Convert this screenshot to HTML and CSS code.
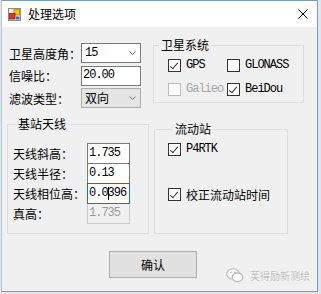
FILE: index.html
```html
<!DOCTYPE html>
<html lang="zh-CN">
<head>
    <meta charset="UTF-8">
    <meta name="viewport" content="width=device-width, initial-scale=1.0">
    <title>处理选项</title>
    <link rel="stylesheet" href="styles.css">
</head>
<body>
    <div class="window">
        <div class="titlebar">
            <svg class="app-icon" viewBox="0 0 13 13">
                <rect x="0.5" y="0.5" width="12" height="12" fill="#e8e8e8" stroke="#8a8a8a"/>
                <rect x="6" y="1.5" width="5.5" height="5.5" fill="#f5c400" stroke="#b08a00" stroke-width="0.8"/>
                <rect x="1.5" y="5.5" width="5.5" height="5.5" fill="#d83a2a" stroke="#8a1f14" stroke-width="0.8"/>
                <rect x="8" y="8.5" width="3.5" height="3" fill="#3a6fc4"/>
            </svg>
            <span class="title">处理选项</span>
            <svg class="close" viewBox="0 0 10 10">
                <path d="M0.5 0.5 L9.5 9.5 M9.5 0.5 L0.5 9.5" stroke="#000" stroke-width="1" fill="none"/>
            </svg>
        </div>

        <div class="client">
            <div class="top">
                <div class="params">
                    <div class="row">
                        <label>卫星高度角：</label>
                        <div class="combo"><span class="val">15</span>
                            <svg class="chev" viewBox="0 0 7 4"><path d="M0.5 0.5 L3.5 3.5 L6.5 0.5" stroke="#555" fill="none"/></svg>
                        </div>
                    </div>
                    <div class="row">
                        <label>信噪比：</label>
                        <div class="textbox wide"><span class="val">20.00</span></div>
                    </div>
                    <div class="row">
                        <label>滤波类型：</label>
                        <div class="combo locked"><span class="cjk-val">双向</span>
                            <svg class="chev" viewBox="0 0 7 4"><path d="M0.5 0.5 L3.5 3.5 L6.5 0.5" stroke="#777" fill="none"/></svg>
                        </div>
                    </div>
                </div>

                <fieldset class="group sat">
                    <legend>卫星系统</legend>
                    <div class="checks">
                        <div class="check"><span class="box on"></span><span class="mono">GPS</span></div>
                        <div class="check"><span class="box"></span><span class="mono">GLONASS</span></div>
                        <div class="check off"><span class="box"></span><span class="mono">Galieo</span></div>
                        <div class="check"><span class="box on"></span><span class="mono">BeiDou</span></div>
                    </div>
                </fieldset>
            </div>

            <div class="middle">
                <fieldset class="group antenna">
                    <legend>基站天线</legend>
                    <div class="arow">
                        <label>天线斜高：</label>
                        <div class="textbox"><span class="val">1.735</span></div>
                    </div>
                    <div class="arow">
                        <label>天线半径：</label>
                        <div class="textbox"><span class="val">0.13</span></div>
                    </div>
                    <div class="arow">
                        <label>天线相位高：</label>
                        <div class="textbox focus"><span class="val">0.0<i class="caret"></i>396</span></div>
                    </div>
                    <div class="arow">
                        <label>真高：</label>
                        <div class="textbox readonly"><span class="val">1.735</span></div>
                    </div>
                </fieldset>

                <fieldset class="group rover">
                    <legend>流动站</legend>
                    <div class="check"><span class="box on"></span><span class="mono">P4RTK</span></div>
                    <div class="check second"><span class="box on"></span><span>校正流动站时间</span></div>
                </fieldset>
            </div>

            <div class="actions">
                <button type="button">确认</button>
            </div>
        </div>

        <div class="watermark">
            <svg class="wechat" viewBox="0 0 18 15">
                <ellipse cx="7" cy="6" rx="6.3" ry="5.2" fill="#fff" stroke="#b5b5b5" stroke-width="1.1"/>
                <ellipse cx="11.5" cy="9.3" rx="5.4" ry="4.4" fill="#fff" stroke="#b5b5b5" stroke-width="1.1"/>
                <circle cx="4.8" cy="4.6" r="0.8" fill="#b5b5b5"/>
                <circle cx="8.6" cy="4.6" r="0.8" fill="#b5b5b5"/>
            </svg>
            <span>芙得励新测绘</span>
        </div>
    </div>
</body>
</html>
```

FILE: styles.css
```css
* { box-sizing: border-box; }
body { margin: 0; background: #dfe6ec; font-family: "Noto Sans CJK SC", sans-serif; font-size: 12px; color: #000; }

.window { position: relative; margin-left: 1px; width: 317px; height: 292px; border: 1px solid #7a9cbd; border-left-color: #b9c8d6; background: #f0f0f0; }

.titlebar { height: 26px; background: #fff; display: flex; align-items: center; padding-left: 6px; }
.app-icon { width: 13px; height: 13px; }
.title { margin-left: 7px; line-height: 14px; }
.close { margin-left: auto; margin-right: 9px; width: 10px; height: 10px; }

.client { padding-top: 11px; }

.top { display: flex; align-items: flex-start; }
.params { display: flex; flex-direction: column; gap: 2.5px; margin: 5px 0 0 7px; }
.row { display: flex; align-items: center; height: 20px; }
.row label { width: 72px; }

.combo, .textbox { display: flex; align-items: center; height: 20px; border: 1px solid #7a7a7a; background: #fff; }
.combo { width: 60px; padding: 0 4px 0 3px; }
.combo.locked { background: #e5e5e5; border-color: #adadad; }
.chev { width: 7px; height: 4px; margin-left: auto; }
.textbox.wide { width: 60px; padding-left: 1px; }

.val, .mono { font-family: "Liberation Mono", monospace; font-size: 12px; letter-spacing: -1px; line-height: 13px; }
.cjk-val { line-height: 14px; }

.group { margin: 0; padding: 0; min-width: 0; border: 1px solid #dcdcdc; }
.group legend { padding: 0 2px; line-height: 14px; }

.sat { width: 151px; height: 65px; margin-left: 12px; }
.sat legend { margin-left: 5px; }
.checks { display: grid; grid-template-columns: 59px auto; row-gap: 11px; padding: 7px 0 0 14px; }

.check { display: flex; align-items: center; gap: 5px; height: 13px; line-height: 13px; }
.box { position: relative; width: 13px; height: 13px; border: 1px solid #333; background: #fff; flex: none; }
.box.on::after { content: ""; position: absolute; left: 3px; top: 1px; width: 3px; height: 7px; border: solid #333; border-width: 0 1px 1px 0; transform: rotate(40deg); }
.check.off .box { border-color: #bcbcbc; }
.check.off .mono { color: #a6a6a6; }

.middle { display: flex; align-items: flex-start; margin-top: 9px; padding-left: 5px; }
.antenna { width: 142px; height: 117px; padding: 12px 0 0 5px; }
.antenna legend { margin-left: 3px; }
.arow { display: flex; align-items: center; height: 21px; }
.arow + .arow { margin-top: -1px; }
.arow label { width: 74px; }
.arow .textbox { position: relative; width: 43px; height: 21px; padding-left: 1px; }
.textbox.focus { border-color: #0078d7; z-index: 1; }
.textbox.readonly { background: #f0f0f0; border-color: #cccccc; color: #9a9a9a; }
.caret { display: inline-block; width: 1px; height: 13px; margin-right: -1px; background: #000; vertical-align: top; }

.rover { width: 134px; height: 112px; margin: 5px 0 0 5px; padding: 7px 0 0 13px; }
.rover legend { margin-left: 5px; }
.rover .second { margin-top: 32px; }

.actions { margin-top: 17px; padding-left: 107px; }
.actions button { width: 88px; height: 27px; border: 1px solid #adadad; background: #e1e1e1; font-family: "Noto Sans CJK SC", sans-serif; font-size: 12px; color: #000; padding: 0; }

.watermark { position: absolute; left: 224px; top: 267px; display: flex; align-items: center; gap: 6px; color: #bdbdbd; font-size: 10px; text-shadow: 0 0 2px #fff; }
.wechat { width: 18px; height: 15px; }
```
